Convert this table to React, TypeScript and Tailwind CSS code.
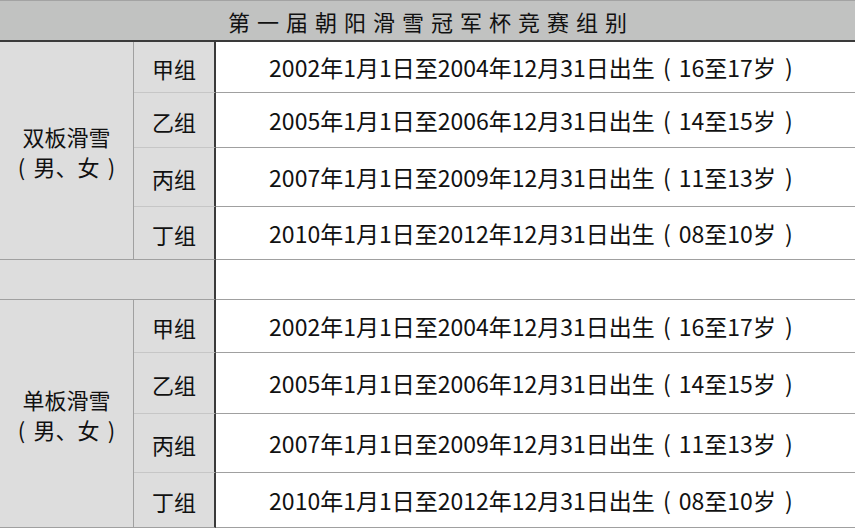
const groups = [
  {
    name: "双板滑雪",
    rows: [
      { label: "甲组", text: "2002年1月1日至2004年12月31日出生", age: "16至17岁" },
      { label: "乙组", text: "2005年1月1日至2006年12月31日出生", age: "14至15岁" },
      { label: "丙组", text: "2007年1月1日至2009年12月31日出生", age: "11至13岁" },
      { label: "丁组", text: "2010年1月1日至2012年12月31日出生", age: "08至10岁" },
    ],
  },
  {
    name: "单板滑雪",
    rows: [
      { label: "甲组", text: "2002年1月1日至2004年12月31日出生", age: "16至17岁" },
      { label: "乙组", text: "2005年1月1日至2006年12月31日出生", age: "14至15岁" },
      { label: "丙组", text: "2007年1月1日至2009年12月31日出生", age: "11至13岁" },
      { label: "丁组", text: "2010年1月1日至2012年12月31日出生", age: "08至10岁" },
    ],
  },
];

const font = { fontFamily: '"Noto Sans CJK SC", "Open Sans", sans-serif' };

function Paren({ c, w = "w-[20px]" }: { c: string; w?: string }) {
  return <span className={`inline-block ${w} text-center`}>{c}</span>;
}

export default function App() {
  return (
    <div className="w-[855px] h-[529px] bg-white text-[22px] text-[#111] leading-none" style={font}>
      {/* title */}
      <div className="h-[42px] border-t border-t-[#a3a3a3] border-b-2 border-b-[#3a3a3a] bg-[#c1c2c1] flex items-center justify-center">
        <span className="tracking-[7px] pl-[7px]">第一届朝阳滑雪冠军杯竞赛组别</span>
      </div>

      <div className="grid grid-cols-[134px_82px_1fr] grid-rows-[51px_55px_59px_53px_40px_53px_61px_59px_55px]">
        {groups.map((g, gi) => (
          <>
            <div
              key={"l" + gi}
              className="row-span-4 bg-[#dddddd] border-r border-b border-[#a0a0a0] flex flex-col items-center justify-center gap-[8px]"
            >
              <span>{g.name}</span>
              <span className="flex items-center">
                <Paren c="(" w="w-[24px]" />
                男、女
                <Paren c=")" w="w-[24px]" />
              </span>
            </div>
            {g.rows.map((r, ri) => (
              <>
                <div
                  key={"m" + gi + ri}
                  className={`bg-[#dddddd] border-r-2 border-r-[#3a3a3a] border-b ${
                    ri === 3 ? "border-b-[#a0a0a0]" : "border-b-[#c6c6c6]"
                  } flex items-center justify-center pt-[2px]`}
                >
                  {r.label}
                </div>
                <div
                  key={"r" + gi + ri}
                  className="border-b border-b-[#a0a0a0] flex items-center justify-center pt-[1px] text-[23px]"
                >
                  {r.text}
                  <Paren c="(" w="w-[24px]" />
                  {r.age}
                  <Paren c=")" w="w-[26px]" />
                </div>
              </>
            ))}
            {gi === 0 && (
              <>
                <div className="col-span-2 bg-[#dddddd] border-r-2 border-r-[#3a3a3a] border-b border-b-[#a0a0a0]" />
                <div className="border-b border-b-[#a0a0a0]" />
              </>
            )}
          </>
        ))}
      </div>
    </div>
  );
}
